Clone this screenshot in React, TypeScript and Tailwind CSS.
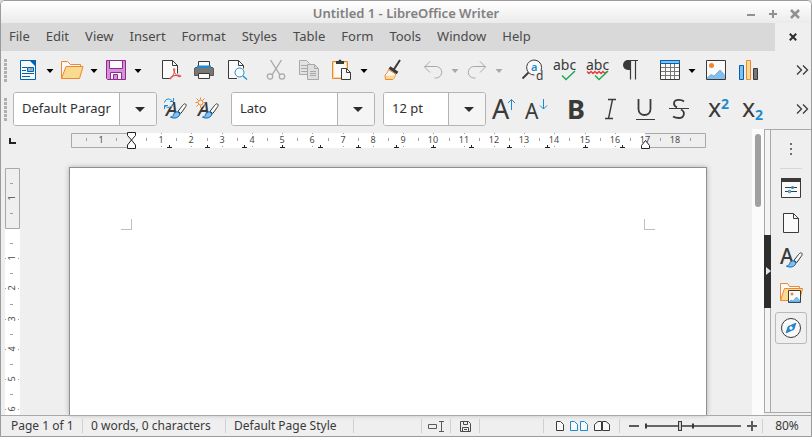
import type { ReactNode } from 'react';

const menus = ['File', 'Edit', 'View', 'Insert', 'Format', 'Styles', 'Table', 'Form', 'Tools', 'Window', 'Help'];

const CM = 30.24;
const range = (from: number, to: number) => Array.from({ length: to - from + 1 }, (_, i) => from + i);

/* ---------- small building blocks ---------- */

function Icon({ children }: { children: ReactNode }) {
  return (
    <svg width="24" height="24" viewBox="0 0 24 24" fill="none" className="block shrink-0 overflow-visible" aria-hidden="true">
      {children}
    </svg>
  );
}

function ToolButton({ label, children }: { label: string; children: ReactNode }) {
  return (
    <button type="button" aria-label={label} className="block size-6 shrink-0">
      {children}
    </button>
  );
}

function Arrow({ label, muted = false }: { label: string; muted?: boolean }) {
  return (
    <button type="button" aria-label={label} className="flex h-6 w-5 shrink-0 items-center justify-center pt-0.5">
      <svg width="8" height="4" viewBox="0 0 8 4" aria-hidden="true">
        <path d="M0.5 0h7L4 4z" fill={muted ? '#a8a8a8' : '#000'} />
      </svg>
    </button>
  );
}

function Handle() {
  return (
    <svg width="3" height="23" viewBox="0 0 3 23" className="shrink-0" aria-hidden="true">
      <path d="M1.5 0v23" stroke="#b0b0b0" strokeWidth="3" strokeDasharray="3 1" />
    </svg>
  );
}

function More() {
  return (
    <button type="button" aria-label="More" className="mr-0.5 ml-auto shrink-0">
      <svg width="13" height="10" viewBox="0 0 13 10" fill="none" stroke="#3a3a38" strokeWidth="1.3" aria-hidden="true">
        <path d="M1 .5 5.500 5 1 9.500M7 .5 11.500 5 7 9.500" />
      </svg>
    </button>
  );
}

function Combo({ label, value, className }: { label: string; value: string; className: string }) {
  return (
    <div className={`flex h-[34px] shrink-0 overflow-hidden rounded-[3px] border border-[#b4b4b4] bg-white ${className}`}>
      <input
        type="text"
        aria-label={label}
        defaultValue={value}
        className="min-w-0 flex-1 bg-white pr-2 pl-2 text-[13px] text-[#303030] outline-none"
      />
      <button
        type="button"
        aria-label={`${label} list`}
        className="flex w-[37px] shrink-0 items-center justify-center border-l border-[#b4b4b4] bg-[#f5f5f5] pl-1"
      >
        <svg width="10" height="5" viewBox="0 0 10 5" aria-hidden="true">
          <path d="M0 0h10L5 5z" fill="#2d2d2d" />
        </svg>
      </button>
    </div>
  );
}

/* ---------- icons ---------- */

const Brush = () => (
  <>
    <path d="M22.500 7c1.200.8.6 2-.2 3.200l-4.500 6.300-2.800-2.200 4.700-6c.9-1.100 1.900-1.900 2.800-1.300z" fill="#fafafa" stroke="#3a3a38" />
    <path d="M14.500 14.800c-2.300-.2-3.300 1.200-3.800 2.700-.4 1.300-1.500 2.200-3.200 2.600 3.500 2 8.800.8 9.500-3.300z" fill="#83beec" stroke="#0063b1" />
  </>
);

const NewDoc = () => (
  <Icon>
    <path d="M4.500 2.500h11l4 4v15h-15z" fill="#fafafa" stroke="#0063b1" />
    <path d="M13 2h7v7z" fill="#0063b1" />
    <path d="M6 9.500h5M6 12.500h4M6 15.500h12M6 18.500h8" stroke="#0063b1" />
    <path d="M11.500 9.500h6v4h-6z" fill="#83beec" stroke="#0063b1" />
    <circle cx="15" cy="11" r="1" fill="#ed8733" />
  </Icon>
);

const OpenFolder = () => (
  <Icon>
    <path d="M1.500 20.500v-17h6l3 3h10v3" fill="#fafafa" stroke="#ed8733" />
    <path d="M1.500 20.500 6 8.500h17l-3.500 12z" fill="#f8db8f" stroke="#ed8733" />
  </Icon>
);

const Save = () => (
  <Icon>
    <path d="M2.500 2.500h19v19h-18l-1-1z" fill="#d492d8" stroke="#92278f" />
    <path d="M5.500 2.500h13v8h-13z" fill="#fafafa" stroke="#92278f" />
    <path d="M6.500 14.500h11v7h-11z" fill="#fafafa" stroke="#92278f" />
    <path d="M9.500 16.500h4v5h-4z" fill="#d492d8" stroke="#92278f" />
  </Icon>
);

const Pdf = () => (
  <Icon>
    <path d="M11 20.500H3.500v-18h10l5 5v8" fill="#fafafa" stroke="#3a3a38" />
    <path d="M13.500 2.500v5h5" stroke="#3a3a38" />
    <path
      d="M15 10.500c1.200 0 .8 2.500-.2 5-1 2.400-2.300 5.500-3.800 5.500-1.500-.5 1.500-3 5-3.500 3.300-.6 5.800-.4 5.800.7 0 1.300-3.300.2-5-1.700-1.800-2-2.800-6-1.800-6z"
      stroke="#e23b3b"
    />
  </Icon>
);

const Print = () => (
  <Icon>
    <path d="M6.500 9V3.500h11V9" fill="#fafafa" stroke="#3a3a38" />
    <path d="M2.500 17.500V11a1.500 1.500 0 0 1 1.500-1.500h16a1.500 1.500 0 0 1 1.500 1.500v6.500z" fill="#797774" stroke="#5a5957" />
    <path d="M5 7.500h14V10H5z" fill="#1e8bcd" />
    <path d="M6.500 15.500h11v5h-11z" fill="#fafafa" stroke="#3a3a38" />
  </Icon>
);

const Preview = () => (
  <Icon>
    <path d="M12 20.500H3.500v-18h10l5 5v3" fill="#fafafa" stroke="#3a3a38" />
    <path d="M13.500 2.500v5h5" stroke="#3a3a38" />
    <circle cx="14.500" cy="14.500" r="4.500" fill="#fafafa" stroke="#1e8bcd" />
    <path d="m18 18 4 3.500" stroke="#1e8bcd" strokeWidth="1.300" />
  </Icon>
);

const Cut = () => (
  <Icon>
    <path d="M6.500 2 16 17M17.500 2 8 17" stroke="#a8a8a8" strokeWidth="1.400" />
    <circle cx="6" cy="18.500" r="2.700" stroke="#a8a8a8" strokeWidth="1.200" />
    <circle cx="18" cy="18.500" r="2.700" stroke="#a8a8a8" strokeWidth="1.200" />
  </Icon>
);

const Copy = () => (
  <Icon>
    <path d="M2.500 2.500h7l3 3v11h-10z" fill="#e3e3e3" stroke="#a8a8a8" />
    <path d="M4 7.500h6M4 10.500h6M4 13.500h6" stroke="#a8a8a8" />
    <path d="M10.500 6.500h7l4 4v11h-11z" fill="#dedede" stroke="#a8a8a8" />
    <path d="M17.500 6.500v4h4M13 13.500h6M13 15.500h6M13 17.500h6" stroke="#a8a8a8" />
  </Icon>
);

const Paste = () => (
  <Icon>
    <path d="M2.500 3.500h15v17h-15z" fill="#fafafa" stroke="#ed8733" />
    <path d="M3.500 4.500h13v15h-13z" stroke="#f8db8f" />
    <path d="M6 6V3h2.500a1.500 1.500 0 0 1 3 0H14v3z" fill="#3a3a38" />
    <path d="M11.500 10.500h5l4 4v7h-9z" fill="#fafafa" stroke="#3a3a38" />
    <path d="M16.500 10.500v4h4" stroke="#3a3a38" />
  </Icon>
);

const Clone = () => (
  <Icon>
    <path d="m7.500 11.500 7 4.500c-.2 2.500-1.200 4.300-2.700 5.500H4.500L4 17c1.800-1.200 3-3 3.500-5.500z" fill="#fafafa" stroke="#ed8733" />
    <path d="M5 17.500h9c-.3 1.600-1.200 2.700-2.400 3.500H5z" fill="#f8db8f" />
    <path d="m8.500 9.500 8 5.500" stroke="#3a3a38" strokeWidth="3" />
    <path d="m12.500 12 6.500-10" stroke="#3a3a38" strokeWidth="2" />
  </Icon>
);

const Undo = () => (
  <Icon>
    <path d="M9 3.500 3.500 9 9 14.500M3.500 8.500h12c7 1 7 10.500 0 11.500h-2" stroke="#a8a8a8" />
  </Icon>
);

const Redo = () => (
  <Icon>
    <path d="M15 3.500 20.500 9 15 14.500M20.500 8.500h-12c-7 1-7 10.500 0 11.500h2" stroke="#a8a8a8" />
  </Icon>
);

const Find = () => (
  <Icon>
    <path d="m8.500 14.500-6 6" stroke="#3a3a38" strokeWidth="1.800" />
    <path d="M21 12.500a7.500 7.500 0 1 0-6.500 4.500" fill="#fafafa" stroke="#3a3a38" />
    <text x="11" y="13" fontSize="11" fontWeight="600" fill="#1e8bcd">a</text>
    <text x="16" y="22" fontSize="12" fill="#3a3a38">d</text>
  </Icon>
);

const Check = () => <path d="m9 17.500 4 4 9-8.500" stroke="#18ab50" strokeWidth="1.500" />;

const Spelling = () => (
  <Icon>
    <text x="0" y="12" fontSize="14" fill="#3a3a38">abc</text>
    <Check />
  </Icon>
);

const AutoSpelling = () => (
  <Icon>
    <text x="0" y="12" fontSize="14" fill="#3a3a38">abc</text>
    <path d="m1 13.500 2 2 2-2 2 2 2-2 2 2 2-2 2 2 2-2 2 2 2-2" stroke="#e23b3b" strokeWidth="1.300" />
    <Check />
  </Icon>
);

const Pilcrow = () => (
  <Icon>
    <path d="M12 2v10H9A5 5 0 0 1 9 2z" fill="#3a3a38" />
    <path d="M8 2.500h11M11.500 2v19.500M16.500 2v19.500" stroke="#3a3a38" strokeWidth="1.200" />
  </Icon>
);

const TableIcon = () => (
  <Icon>
    <path d="M2.500 2.500h19v19h-19z" fill="#fafafa" stroke="#3a3a38" />
    <path d="M3 9.500h18M3 13.500h18M3 17.500h18M7.500 6v15M12.500 6v15M16.500 6v15" stroke="#797774" />
    <path d="M2.500 2.500h19v3h-19z" fill="#83beec" stroke="#0063b1" />
  </Icon>
);

const Picture = () => (
  <Icon>
    <path d="M2.500 2.500h19v19h-19z" fill="#fafafa" stroke="#3a3a38" />
    <circle cx="7.500" cy="7.500" r="2.500" fill="#ed8733" />
    <path d="M3 21v-1l4-3.500 3 1.500 6-6 5 5.500V21z" fill="#83beec" />
    <path d="m3 20 4-3.500 3 1.500 6-6 5 5.500" stroke="#5a9fd4" strokeWidth=".7" />
  </Icon>
);

const Chart = () => (
  <Icon>
    <path d="M2.500 7.500h4v14h-4z" fill="#83beec" stroke="#0063b1" />
    <path d="M9.500 2.500h4v19h-4z" fill="#f8db8f" stroke="#ed8733" />
    <path d="M16.500 10.500h4v11h-4z" fill="#797774" stroke="#3a3a38" />
  </Icon>
);

const UpdateStyle = () => (
  <Icon>
    <text x="3" y="19" fontSize="20" fontStyle="italic" fontWeight="500" fill="#3a3a38">A</text>
    <circle cx="5.500" cy="6" r="4.500" fill="#efefef" />
    <path d="M1.500 5.500c1-4.500 6-4.500 8-1M10.500 1v3.500H7M9.500 7c-1 4-6 4.500-8 1.500M1.500 12V8.500H5" stroke="#1e8bcd" />
    <Brush />
  </Icon>
);

const NewStyle = () => (
  <Icon>
    <text x="3" y="19" fontSize="20" fontStyle="italic" fontWeight="500" fill="#3a3a38">A</text>
    <circle cx="5.500" cy="5.500" r="4.500" fill="#efefef" />
    <circle cx="5.500" cy="5.500" r="2.500" stroke="#ed8733" />
    <path d="M5.500.5v2M5.500 8.500v2M.5 5.500h2M8.500 5.500h2M1.500 1.500l2 2M7.500 3.500l2-2M1.500 9.500l2-2M7.500 7.500l2 2" stroke="#ed8733" />
    <Brush />
  </Icon>
);

const Styles = () => (
  <Icon>
    <text x="1" y="18" fontSize="21" fontWeight="500" fill="#3a3a38">A</text>
    <Brush />
  </Icon>
);

const Settings = () => (
  <Icon>
    <path d="M2.500 2.500h19v19h-19z" fill="#fafafa" stroke="#3a3a38" />
    <path d="M2 2h20v4H2z" fill="#3a3a38" />
    <path d="M6 11.500h12M6 15.500h12" stroke="#3a3a38" />
    <circle cx="13.500" cy="11.500" r="1.500" fill="#1e8bcd" />
    <circle cx="10.500" cy="15.500" r="1.300" fill="#83beec" stroke="#1e8bcd" />
  </Icon>
);

const Page = () => (
  <Icon>
    <path d="M4.500 2.500h10l5 5v14h-15z" fill="#fafafa" stroke="#3a3a38" />
    <path d="M14.500 2.500v5h5" stroke="#3a3a38" />
  </Icon>
);

const Gallery = () => (
  <Icon>
    <path d="M1.500 19.500v-17h7l2 3h10v4" fill="#fafafa" stroke="#ed8733" />
    <path d="m1.500 19.500 4-12h18l-3 12z" fill="#f8db8f" stroke="#ed8733" />
    <path d="M9.500 9.500h12v12h-12z" fill="#fafafa" stroke="#3a3a38" />
    <circle cx="13" cy="13" r="1.500" fill="#ed8733" />
    <path d="m10 21 2-2 2 1 3.500-4 3.500 3.500V21z" fill="#83beec" stroke="#1e8bcd" strokeWidth=".5" />
  </Icon>
);

const Navigator = () => (
  <Icon>
    <circle cx="12" cy="12" r="9.500" fill="#fafafa" stroke="#3a3a38" />
    <path d="m17 7-2 6.500L7 17l2-6.500z" fill="#1e8bcd" stroke="#0063b1" strokeWidth=".5" />
    <circle cx="12" cy="12" r="1.700" fill="#fafafa" />
  </Icon>
);

/* ---------- rulers ---------- */

function HorizontalRuler() {
  const zero = 62;
  return (
    <svg width="638" height="18" viewBox="0 0 638 18" fill="none" className="block shrink-0" aria-label="Horizontal ruler">
      <path d="M62 1h514v15H62z" fill="#fff" />
      <path d="M62 1.500H2.500v14H62M576 1.500h60.500v14H576" stroke="#a9a9a9" />
      {range(-2, 18).map((n) => {
        const x = Math.round(zero + (n + 0.5) * CM) + 0.5;
        return <path key={n} d={`M${x} 6v3`} stroke="#a0a0a0" />;
      })}
      {range(1, 16).map((n) => {
        const x = Math.round(zero + n * CM) + 0.5;
        return <path key={n} d={`M${x} 1v1M${x} 14v1`} stroke="#a0a0a0" />;
      })}
      {[-1, ...range(1, 18)].map((n) => (
        <text key={n} x={Math.round(zero + n * CM)} y="11" fontSize="9" textAnchor="middle" fill="#4a4a4a">
          {Math.abs(n)}
        </text>
      ))}
      {/* default tab stops every 1.25 cm */}
      {range(1, 13).map((n) => {
        const x = Math.round(zero + n * CM * 1.25) + 0.5;
        return <path key={n} d={`M${x} 13v3M${x - 2.5} 15.500h5`} stroke="#222" />;
      })}
      <path d="M58.500.5h8v3l-4 4.500 4 5v3.500h-8V13l4-5-4-4.500z" fill="#fff" stroke="#222" />
      <path d="M572.500 16.500v-3l4-5 4 5v3z" fill="#fff" stroke="#222" />
    </svg>
  );
}

function VerticalRuler() {
  const zero = 60;
  const last = Math.max(1, Math.floor((window.innerHeight - 230) / CM));
  return (
    <svg width="15" height="100%" fill="none" className="block bg-white" aria-label="Vertical ruler">
      <path d="M.5.5h14v60H.5z" fill="#efefef" stroke="#a9a9a9" />
      {range(-2, last).map((n) => {
        const y = Math.round(zero + (n + 0.5) * CM) + 0.5;
        return <path key={n} d={`M5 ${y}h3`} stroke="#a0a0a0" />;
      })}
      {range(1, last).map((n) => {
        const y = Math.round(zero + n * CM) + 0.5;
        return <path key={n} d={`M0 ${y}h1M13 ${y}h1`} stroke="#a0a0a0" />;
      })}
      {[-1, ...range(1, last)].map((n) => (
        <text
          key={n}
          transform={`translate(10 ${Math.round(zero + n * CM)}) rotate(-90)`}
          fontSize="9"
          textAnchor="middle"
          fill="#4a4a4a"
        >
          {Math.abs(n)}
        </text>
      ))}
    </svg>
  );
}

/* ---------- window parts ---------- */

function TitleBar() {
  return (
    <header className="grid h-[22px] shrink-0 grid-cols-[1fr_auto_1fr] items-center bg-linear-to-b from-white to-[#ebebeb]">
      <h1 className="col-start-2 pt-0.5 text-[13px] leading-4 font-semibold text-[#808080]">Untitled 1 - LibreOffice Writer</h1>
      <div className="flex justify-end gap-[10px] pt-1 pr-[10px]">
        <button type="button" aria-label="Minimize">
          <svg width="12" height="12" viewBox="0 0 12 12" stroke="#909090" strokeWidth="2"><path d="M2 7h8" /></svg>
        </button>
        <button type="button" aria-label="Maximize">
          <svg width="12" height="12" viewBox="0 0 12 12" stroke="#909090" strokeWidth="2"><path d="M2 6h8M6 2v8" /></svg>
        </button>
        <button type="button" aria-label="Close window">
          <svg width="12" height="12" viewBox="0 0 12 12" stroke="#909090" strokeWidth="2.500"><path d="m2 2 8 8M10 2l-8 8" /></svg>
        </button>
      </div>
    </header>
  );
}

function MenuBar() {
  return (
    <div className="flex h-7 shrink-0">
      <nav className="flex flex-1 items-center gap-4 bg-[#d9d9d9] pl-2 text-[13px] text-[#4a4a4a]">
        {menus.map((m) => (
          <button key={m} type="button">{m}</button>
        ))}
      </nav>
      <button type="button" aria-label="Close document" className="flex w-9 items-center justify-center">
        <svg width="8" height="8" viewBox="0 0 8 8" stroke="#2d2d2d" strokeWidth="2"><path d="m.8.8 6.400 6.400M7.200.8.8 7.200" /></svg>
      </button>
    </div>
  );
}

function StandardToolbar() {
  return (
    <div className="flex h-10 shrink-0 items-center pb-0.5 pl-[3px]">
      <Handle />
      <div className="ml-[9px] flex">
        <ToolButton label="New"><NewDoc /></ToolButton>
        <Arrow label="New options" />
        <ToolButton label="Open"><OpenFolder /></ToolButton>
        <Arrow label="Recent files" />
        <ToolButton label="Save"><Save /></ToolButton>
        <Arrow label="Save options" />
      </div>
      <div className="ml-[11px] flex gap-[9px]">
        <ToolButton label="Export as PDF"><Pdf /></ToolButton>
        <ToolButton label="Print"><Print /></ToolButton>
        <ToolButton label="Print preview"><Preview /></ToolButton>
      </div>
      <div className="ml-[15px] flex gap-[9px]">
        <ToolButton label="Cut"><Cut /></ToolButton>
        <ToolButton label="Copy"><Copy /></ToolButton>
        <ToolButton label="Paste"><Paste /></ToolButton>
      </div>
      <Arrow label="Paste options" />
      <div className="mr-4 ml-[7px] flex">
        <ToolButton label="Clone formatting"><Clone /></ToolButton>
      </div>
      <ToolButton label="Undo"><Undo /></ToolButton>
      <Arrow label="Undo list" muted />
      <ToolButton label="Redo"><Redo /></ToolButton>
      <Arrow label="Redo list" muted />
      <div className="mr-[15px] ml-[11px] flex gap-[9px]">
        <ToolButton label="Find and replace"><Find /></ToolButton>
        <ToolButton label="Spelling"><Spelling /></ToolButton>
        <ToolButton label="Automatic spelling"><AutoSpelling /></ToolButton>
        <ToolButton label="Formatting marks"><Pilcrow /></ToolButton>
      </div>
      <ToolButton label="Insert table"><TableIcon /></ToolButton>
      <Arrow label="Table options" />
      <div className="ml-0.5 flex gap-[9px]">
        <ToolButton label="Insert image"><Picture /></ToolButton>
        <ToolButton label="Insert chart"><Chart /></ToolButton>
      </div>
      <More />
    </div>
  );
}

function FormattingToolbar() {
  return (
    <div className="flex h-9 shrink-0 items-center pl-[3px]">
      <Handle />
      <Combo label="Paragraph style" value="Default Paragraph Style" className="ml-[6px] w-36" />
      <div className="mr-3 ml-[6px] flex gap-2">
        <ToolButton label="Update style"><UpdateStyle /></ToolButton>
        <ToolButton label="New style"><NewStyle /></ToolButton>
      </div>
      <Combo label="Font name" value="Lato" className="mr-2 w-36" />
      <Combo label="Font size" value="12 pt" className="w-[103px]" />
      <div className="ml-[6px] flex gap-[9px]">
        <ToolButton label="Increase size">
          <Icon>
            <text x="0" y="22" fontSize="27" fill="#3a3a38">A</text>
            <path d="M19.500 13V2.500M16 6l3.500-3.500L23 6" stroke="#1e8bcd" />
          </Icon>
        </ToolButton>
        <ToolButton label="Decrease size">
          <Icon>
            <text x="0" y="22" fontSize="21" fill="#3a3a38">A</text>
            <path d="M18.500 2v10M15 8.500l3.500 3.500L22 8.500" stroke="#1e8bcd" />
          </Icon>
        </ToolButton>
      </div>
      <div className="ml-4 flex gap-[10px]">
        <ToolButton label="Bold">
          <Icon><text x="2" y="22" fontSize="27" fontWeight="700" fill="#3a3a38">B</text></Icon>
        </ToolButton>
        <ToolButton label="Italic">
          <Icon><path d="M9 2.500h8M6 21.500h8M13.500 2.500l-4 19" stroke="#3a3a38" strokeWidth="1.400" /></Icon>
        </ToolButton>
        <ToolButton label="Underline">
          <Icon>
            <path d="M5.500 2v10c0 8 12 8 12 0V2" stroke="#3a3a38" strokeWidth="1.800" />
            <path d="M3 22.500h19" stroke="#3a3a38" />
          </Icon>
        </ToolButton>
        <ToolButton label="Strikethrough">
          <Icon>
            <path d="M17 4.500c-3-2.500-10-2.500-10 2 0 2 1 3 3 4M14 12.500c5 2.500 3 8.500-2 8.500-2.500 0-4.500-.6-6-1.600" stroke="#3a3a38" strokeWidth="1.800" />
            <path d="M2 11.500h20" stroke="#3a3a38" />
          </Icon>
        </ToolButton>
      </div>
      <div className="ml-4 flex gap-[10px]">
        <ToolButton label="Superscript">
          <Icon>
            <text x="1" y="20" fontSize="25" fill="#3a3a38">x</text>
            <text x="14" y="12" fontSize="14" fontWeight="700" fill="#1e8bcd">2</text>
          </Icon>
        </ToolButton>
        <ToolButton label="Subscript">
          <Icon>
            <text x="1" y="20" fontSize="25" fill="#3a3a38">x</text>
            <text x="14" y="23" fontSize="14" fontWeight="700" fill="#1e8bcd">2</text>
          </Icon>
        </ToolButton>
      </div>
      <More />
    </div>
  );
}

function Workspace() {
  return (
    <div className="flex min-w-0 flex-1 flex-col">
      <div className="flex h-10 shrink-0">
        <div className="flex w-[19px] shrink-0 items-center justify-center">
          <svg width="7" height="6" viewBox="0 0 7 6" fill="none" className="mb-3 ml-1" aria-hidden="true">
            <path d="M1 0v5h6" stroke="#222" strokeWidth="2" />
          </svg>
        </div>
        <div className="flex min-w-0 flex-1 justify-center overflow-hidden pt-[5px] pl-[3px]">
          <HorizontalRuler />
        </div>
      </div>
      <div className="flex min-h-0 flex-1">
        <div className="ml-1 w-[15px] shrink-0 overflow-hidden pt-px">
          <VerticalRuler />
        </div>
        <main className="flex min-w-0 flex-1 justify-center overflow-x-clip pl-[3px]">
          <div className="flex w-[638px] shrink-0 items-start justify-between border border-b-0 border-[#8f8f8f] bg-white px-[51px] pt-[51px] shadow-[0_0_5px_#b0b0b0]">
            <span className="size-[11px] border-r border-b border-[#c0c0c0]" />
            <span className="size-[11px] border-b border-l border-[#c0c0c0]" />
          </div>
        </main>
      </div>
    </div>
  );
}

function Sidebar() {
  return (
    <aside className="mt-0.5 mb-0.5 flex shrink-0 border-t border-b border-[#a9a9a9]">
      <button
        type="button"
        aria-label="Hide sidebar"
        className="flex w-[7px] flex-col items-center justify-center border-r border-l border-[#a9a9a9] bg-[#f4f4f4]"
      >
        <span className="-mx-px flex h-[73px] w-[7px] items-center justify-end bg-[#2d2d2d]">
          <svg width="5" height="8" viewBox="0 0 5 8" aria-hidden="true"><path d="M0 0v8l5-4z" fill="#e6e6e6" /></svg>
        </span>
      </button>
      <div className="flex w-10 flex-col items-center gap-[3px] pt-3">
        <button type="button" aria-label="Sidebar settings">
          <svg width="12" height="14" viewBox="0 0 12 14" fill="#707070" aria-hidden="true">
            <path d="M5 1h2v2H5zM5 6h2v2H5zM5 11h2v2H5z" />
          </svg>
        </button>
        <hr className="mt-[9px] w-[22px] border-[#d6d6d6]" />
        {[
          { label: 'Properties', icon: <Settings /> },
          { label: 'Page', icon: <Page /> },
          { label: 'Styles', icon: <Styles /> },
          { label: 'Gallery', icon: <Gallery /> },
          { label: 'Navigator', icon: <Navigator />, active: true },
        ].map((t) => (
          <button
            key={t.label}
            type="button"
            aria-label={t.label}
            className={`flex size-8 items-center justify-center rounded-[3px] border ${t.active ? 'border-[#b9b9b9]' : 'border-transparent'}`}
          >
            {t.icon}
          </button>
        ))}
      </div>
    </aside>
  );
}

function StatusBar() {
  return (
    <footer className="flex h-[21px] shrink-0 items-center border-t border-[#a9a9a9] text-[12px] text-[#3a3a3a]">
      <span className="w-[82px] border-r border-[#d0d0d0] pl-[10px] leading-[14px] whitespace-nowrap">Page 1 of 1</span>
      <span className="w-[143px] border-r border-[#d0d0d0] pl-2 leading-[14px] whitespace-nowrap">0 words, 0 characters</span>
      <span className="w-32 border-r border-[#d0d0d0] pl-2 leading-[14px] whitespace-nowrap">Default Page Style</span>
      <span className="h-[14px] flex-1 border-r border-[#d0d0d0]" />
      <button type="button" aria-label="Insert mode" className="flex h-[14px] w-[29px] items-center justify-center border-r border-[#d0d0d0]">
        <svg width="17" height="11" viewBox="0 0 17 11" fill="none" stroke="#5a5a5a">
          <path d="M.5 3.500h8v4h-8zM11 .5h5M11 10.500h5M13.500 0v11" />
        </svg>
      </button>
      <button type="button" aria-label="Document saved" className="flex h-[14px] w-[29px] items-center justify-center border-r border-[#d0d0d0]">
        <svg width="11" height="11" viewBox="0 0 11 11" fill="none" stroke="#4a4a4a">
          <path d="M.5.5h8l2 2v8H.5zM3.500.5v3h4v-3M2.500 10V6.500h6V10M4 8.500h3" />
        </svg>
      </button>
      <span className="h-[14px] w-16 border-r border-[#d0d0d0]" />
      <div className="flex h-[14px] w-[76px] items-center gap-[6px] border-r border-[#d0d0d0] pl-3">
        <button type="button" aria-label="Single page view">
          <svg width="8" height="10" viewBox="0 0 8 10" fill="#fafafa" stroke="#3a3a38"><path d="M.5.5h4l3 3v6h-7z" /></svg>
        </button>
        <button type="button" aria-label="Multiple page view">
          <svg width="18" height="10" viewBox="0 0 18 10" fill="#fafafa" stroke="#1e8bcd"><path d="M.5.5h4l3 3v6h-7zM10.500.5h4l3 3v6h-7z" /></svg>
        </button>
        <button type="button" aria-label="Book view">
          <svg width="16" height="10" viewBox="0 0 16 10" fill="#fafafa" stroke="#3a3a38"><path d="M7.500.5H4l-3.500 3v6h7zM8.500.5H12l3.500 3v6h-7z" /></svg>
        </button>
      </div>
      <div className="flex h-[14px] w-[143px] items-center gap-[6px] border-r border-[#d0d0d0] pl-[9px]">
        <button type="button" aria-label="Zoom out">
          <svg width="10" height="10" viewBox="0 0 10 10" stroke="#5a5a5a" strokeWidth="2"><path d="M0 5h10" /></svg>
        </button>
        <div className="relative h-[14px] w-24">
          <svg width="96" height="14" viewBox="0 0 96 14" stroke="#3a3a38" className="absolute inset-0" aria-hidden="true">
            <path d="M0 7h96" strokeWidth="1.300" />
            <path d="M1 4.500v5M48 4.500v5" strokeWidth="2" />
          </svg>
          <input
            type="range"
            aria-label="Zoom"
            min={0}
            max={100}
            defaultValue={36}
            className="absolute inset-0 m-0 h-[14px] w-full appearance-none bg-transparent [&::-webkit-slider-thumb]:h-[10px] [&::-webkit-slider-thumb]:w-1 [&::-webkit-slider-thumb]:appearance-none [&::-webkit-slider-thumb]:border [&::-webkit-slider-thumb]:border-[#3a3a38] [&::-webkit-slider-thumb]:bg-[#d0d0d0]"
          />
        </div>
        <button type="button" aria-label="Zoom in">
          <svg width="10" height="10" viewBox="0 0 10 10" stroke="#5a5a5a" strokeWidth="2"><path d="M0 5h10M5 0v10" /></svg>
        </button>
      </div>
      <span className="w-12 text-center leading-[14px]">80%</span>
    </footer>
  );
}

export default function App() {
  return (
    <div className="h-screen bg-[#d8d8d8]">
      <div className="flex h-full flex-col overflow-hidden rounded-t-[5px] border border-[#9b9b9b] bg-[#efefef] font-['Noto_Sans',sans-serif]">
        <TitleBar />
        <MenuBar />
        <StandardToolbar />
        <FormattingToolbar />
        <div className="flex min-h-0 flex-1">
          <Workspace />
          <div className="mt-0.5 w-3 shrink-0 bg-[#fbfbfb] px-[3px] pt-[5px]">
            <div className="h-[73px] rounded-full bg-[#a0a0a0]" />
          </div>
          <Sidebar />
        </div>
        <StatusBar />
      </div>
    </div>
  );
}
